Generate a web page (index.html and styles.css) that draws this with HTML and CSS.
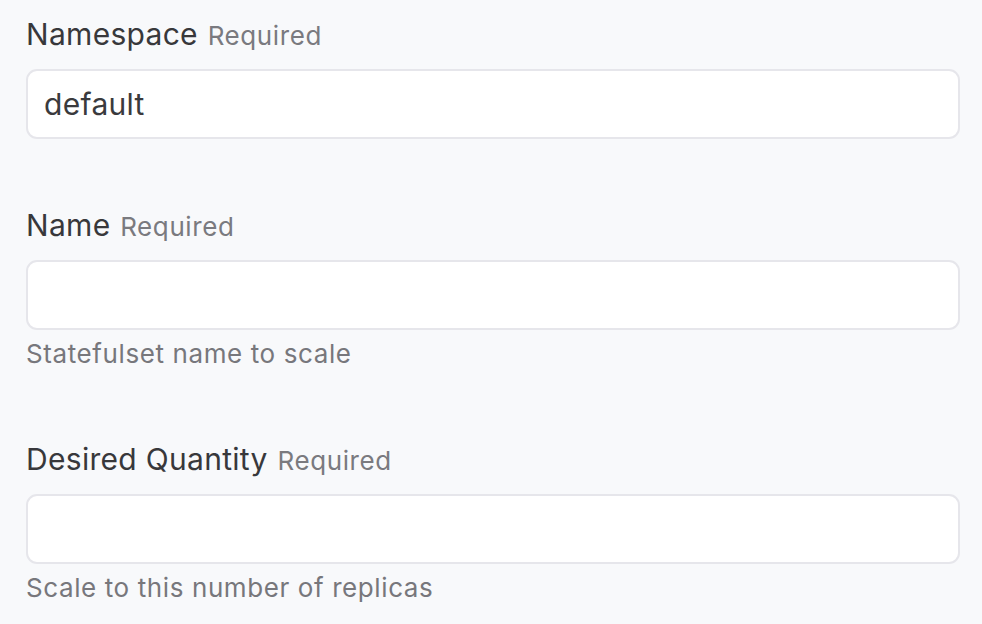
FILE: index.html
```html
<!DOCTYPE html>
<html>
<head>
<meta charset="utf-8">
<link rel="stylesheet" href="styles.css">
</head>
<body>
<form class="form">
  <div class="field">
    <label class="label">Namespace <span class="req">Required</span></label>
    <input class="input" type="text" value="default">
  </div>
  <div class="field">
    <label class="label">Name <span class="req">Required</span></label>
    <input class="input" type="text" value="">
    <div class="help">Statefulset name to scale</div>
  </div>
  <div class="field">
    <label class="label">Desired Quantity <span class="req">Required</span></label>
    <input class="input" type="text" value="">
    <div class="help">Scale to this number of replicas</div>
  </div>
</form>
</body>
</html>
```
FILE: styles.css
```css
html, body {
  margin: 0;
  padding: 0;
  background: #f8f9fb;
}
body {
  font-family: Inter, "Noto Sans", sans-serif;
  color: #3a3a3d;
}
.form {
  display: flex;
  flex-direction: column;
  gap: 66px;
  padding: 14px 22px 0 26px;
}
.field {
  display: flex;
  flex-direction: column;
}
.label {
  font-size: 30px;
  line-height: 40px;
  height: 40px;
  font-weight: 400;
  letter-spacing: 0.3px;
  color: #38383b;
}
.req {
  font-size: 26px;
  letter-spacing: 0.6px;
  color: #7a7a7f;
  margin-left: 1px;
}
.input {
  margin-top: 15px;
  box-sizing: border-box;
  height: 70px;
  width: 100%;
  border: 2px solid #e6e6eb;
  border-radius: 11px;
  background: #ffffff;
  padding: 0 16px;
  font-family: Inter, "Noto Sans", sans-serif;
  font-size: 30px;
  letter-spacing: 0.3px;
  color: #3a3a3d;
  outline: none;
}
.help {
  margin-top: 5px;
  font-size: 26px;
  line-height: 38px;
  letter-spacing: 0.6px;
  color: #77777c;
}
```
